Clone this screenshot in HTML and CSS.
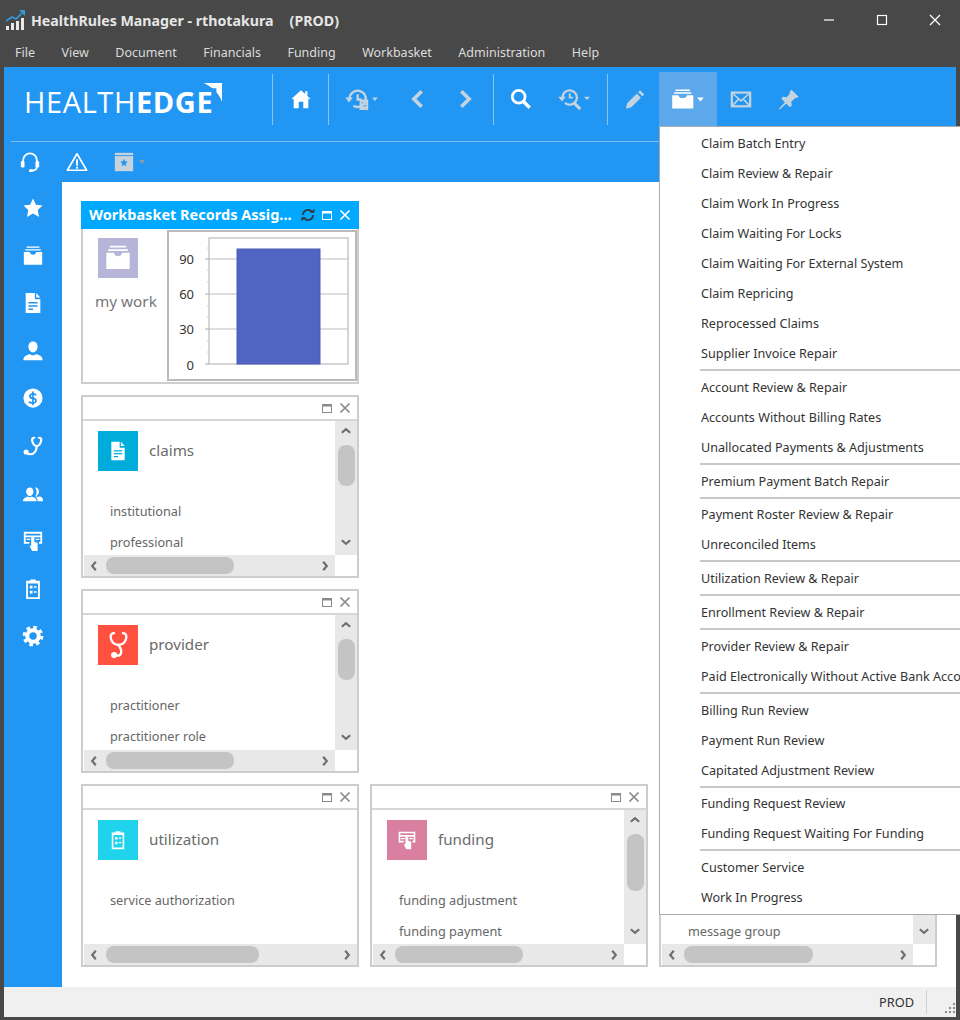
FILE: index.html
```html
<!DOCTYPE html>
<html>
<head>
    <title>HealthRules Manager</title>
    <link rel="stylesheet" href="styles.css">
</head>
<body>
    <svg class="sprite">
        <symbol id="i-star" viewBox="0 0 24 24"><path d="M12 1.500l3.200 6.900 7.300.9-5.400 5 1.500 7.400L12 18.000l-6.600 3.700 1.500-7.400-5.400-5 7.300-.9z"/></symbol>
        <symbol id="i-inbox" viewBox="0 0 24 24"><path d="M5 1.500h14v1.600H5zM3.500 4.500h17v1.600h-17zM2 7.500h6.500c.4 2 1.700 3 3.500 3s3.100-1 3.500-3H22v14H2z"/></symbol>
        <symbol id="i-doc" viewBox="0 0 24 24"><path fill-rule="evenodd" d="M4 1h10v7h6v15H4zM15.500 1l4.500 5h-4.500zM7 11h10v1.500H7zM7 14.500h10V16H7zM7 18h5v1.500H7z"/></symbol>
        <symbol id="i-person" viewBox="0 0 24 24"><path d="M12 1.500c3.200 0 5 2.300 5 5.500s-2 6.500-5 6.500S7 10.200 7 7s1.800-5.500 5-5.500zM1.500 22c0-4.500 3.200-5.200 7-6.800.9.900 2.200 1.300 3.500 1.300s2.600-.4 3.500-1.300c3.800 1.600 7 2.300 7 6.800z"/></symbol>
        <symbol id="i-dollar" viewBox="0 0 24 24"><path fill-rule="evenodd" d="M12 1.500a10.500 10.500 0 1 1 0 21 10.500 10.500 0 0 1 0-21zM11 5v1.700c-2 .3-3.300 1.500-3.300 3.300 0 2 1.500 2.800 3.300 3.300v3c-1 0-2-.4-2.800-1.100L7 16.800c1 .9 2.400 1.500 4 1.500V20h1.800v-1.700c2.100-.3 3.400-1.600 3.400-3.500 0-2.100-1.500-2.900-3.400-3.400V8.600c.8.100 1.500.4 2.200.9l1-1.600c-.9-.7-2-1.100-3.200-1.200V5zm0 3.600v2.500c-.9-.3-1.300-.6-1.300-1.200 0-.7.500-1.200 1.300-1.300zm1.800 5.100c1 .3 1.400.7 1.400 1.300 0 .8-.5 1.300-1.400 1.400z"/></symbol>
        <symbol id="i-stetho" viewBox="0 0 24 24"><g fill="none" stroke="currentColor" stroke-width="2.400" stroke-linecap="round"><path d="M13.500 3c-1.500 0-2.500 1-2.500 2.500 0 3 2.500 6.500 5 6.500s5-3.500 5-6.500C21 4 20 3 18.500 3"/><path d="M16 12c0 5-2.500 9-7 9-2 0-3-.5-4-1.500"/></g><circle cx="4.500" cy="18.500" r="2.800"/></symbol>
        <symbol id="i-stetho-v" viewBox="0 0 24 32"><g fill="none" stroke="currentColor" stroke-width="2.600" stroke-linecap="round"><path d="M7 2.500C4.500 2.500 3 4 3 6.500c0 5 3.500 9.500 9 9.500s9-4.500 9-9.500c0-2.500-1.500-4-4-4"/><path d="M12 16c2.500 4 4 5.500 3 9-.6 2.300-3 3.500-5.500 3"/></g><circle cx="7" cy="27.500" r="3.500"/></symbol>
        <symbol id="i-people" viewBox="0 0 24 24"><path d="M8.500 5c2.500 0 4 1.900 4 4.300s-1.600 5-4 5-4-2.600-4-5S6 5 8.500 5zM1 20c0-3.500 2.500-4.100 5.300-5.300.6.600 1.300.9 2.200.9s1.600-.3 2.200-.9c2.800 1.200 5.300 1.800 5.300 5.300zM14 5c2.400-.4 4.500 1.500 4.500 4.300 0 2.400-1.500 5-3.800 5 1.900-3 1.600-7-.7-9.300zM17 20c0-2.400-.8-4-2.500-5l1-.6c.6.600 1.300.9 2 .9s1.400-.3 2-.9c2.600 1.200 3.500 2 3.500 5.600z"/></symbol>
        <symbol id="i-fund" viewBox="0 0 24 24"><path fill-rule="evenodd" d="M2 2h20v13h-3.500v-2H20V8H4v5h4v2H2zM4 4v2h16V4zM5 9.500h4V11H5zM15 9.500h4V11h-4z"/><path d="M10 8h3.500v5l3.500 1v9h-6l-3-6 2 .5z"/></symbol>
        <symbol id="i-clip" viewBox="0 0 24 24"><path fill-rule="evenodd" d="M9 1.500h6V3h4.500v20h-15V3H9zM6.500 6v15h11V6zM8.500 8.500h3v3h-3zM13 9h3v1.500h-3zM8.500 14h3v3h-3zM13 14.500h3V16h-3z"/></symbol>
        <symbol id="i-gear" viewBox="0 0 24 24"><circle cx="12" cy="12" r="6.300" fill="none" stroke="currentColor" stroke-width="4.400"/><circle cx="12" cy="12" r="9.600" fill="none" stroke="currentColor" stroke-width="3.400" stroke-dasharray="3.900 3.640"/></symbol>
        <symbol id="i-max" viewBox="0 0 12 12"><path fill-rule="evenodd" d="M1 2h10v9H1zM2 4.500V10h8V4.500z"/></symbol>
        <symbol id="i-close" viewBox="0 0 12 12"><path d="M1.500 1.500l9 9M10.500 1.500l-9 9" fill="none" stroke="currentColor" stroke-width="1.700"/></symbol>
        <symbol id="i-up" viewBox="0 0 10 10"><path d="M1.500 6.500L5 3.500l3.500 3" fill="none" stroke="currentColor" stroke-width="1.800"/></symbol>
        <symbol id="i-down" viewBox="0 0 10 10"><path d="M1.500 3.500L5 6.500l3.500-3" fill="none" stroke="currentColor" stroke-width="1.800"/></symbol>
        <symbol id="i-left" viewBox="0 0 10 10"><path d="M6.500 1.500L3.500 5l3 3.500" fill="none" stroke="currentColor" stroke-width="1.800"/></symbol>
        <symbol id="i-right" viewBox="0 0 10 10"><path d="M3.500 1.500L6.500 5l-3 3.500" fill="none" stroke="currentColor" stroke-width="1.800"/></symbol>
    </svg>

    <div class="titlebar">
        <svg class="app-icon" viewBox="0 0 20 20">
            <path d="M0 16h3v4H0zM5 13h3v7H5zM10 11h3v9h-3zM15 8h3v12h-3z" fill="#e8e8e8"/>
            <path d="M0 11l6-4 4 2 7-7" fill="none" stroke="#2f9bd8" stroke-width="1.600"/>
            <path d="M13 0h6v6z" fill="#2f9bd8"/>
        </svg>
        <span class="app-title">HealthRules Manager - rthotakura</span>
        <span class="app-title env">(PROD)</span>
        <div class="win-controls">
            <svg viewBox="0 0 12 12"><path d="M1 6h10" stroke="#fff" stroke-width="1.200"/></svg>
            <svg viewBox="0 0 12 12"><rect x="1.500" y="1.500" width="9" height="9" fill="none" stroke="#fff" stroke-width="1.200"/></svg>
            <svg viewBox="0 0 12 12"><path d="M1 1l10 10M11 1L1 11" stroke="#fff" stroke-width="1.300"/></svg>
        </div>
    </div>

    <div class="menubar">
        <span>File</span><span>View</span><span>Document</span><span>Financials</span><span>Funding</span><span>Workbasket</span><span>Administration</span><span>Help</span>
    </div>

    <div class="app">
        <div class="toolbar">
            <div class="logo">
                <span class="logo-text">HEALTH<b>EDGE</b></span>
                <svg class="logo-mark" viewBox="0 0 20 21"><path d="M0 0h19v20c-2-7-9-15-19-20z" fill="#fff"/><path d="M6 5.500h7v7c-2-3-4-5-7-7z" fill="#2196f3"/></svg>
            </div>
            <div class="tb-sep"></div>
            <div class="tb-btn w-home">
                <svg class="ic white" viewBox="0 0 24 24"><path d="M12 2.500l4.500 4V3.500h2.500v5.200l3.500 3.300H20v10h-5.500v-7h-5v7H4V12H1.500z"/></svg>
            </div>
            <div class="tb-sep"></div>
            <div class="tb-btn w-hist">
                <svg class="ic wide dim" viewBox="0 0 34 24"><g fill="none" stroke="currentColor" stroke-width="2.400"><path d="M4.500 11a8.500 8.500 0 1 1 4 7.500"/><path d="M13 6.500V12h4"/></g><path d="M0 10h8l-4 5z"/><path fill-rule="evenodd" d="M15 12h9v11h-9zM17 15v1h5v-1zM17 18v1h5v-1z"/><path d="M28 10h6l-3 3.500z"/></svg>
            </div>
            <div class="tb-btn w-nav">
                <svg class="ic dim" viewBox="0 0 24 24"><path d="M16 3.500L7.500 12l8.500 8.500" fill="none" stroke="currentColor" stroke-width="4"/></svg>
            </div>
            <div class="tb-btn w-nav w-nav-last">
                <svg class="ic dim" viewBox="0 0 24 24"><path d="M8 3.500l8.500 8.500L8 20.500" fill="none" stroke="currentColor" stroke-width="4"/></svg>
            </div>
            <div class="tb-sep"></div>
            <div class="tb-btn w-search">
                <svg class="ic white" viewBox="0 0 24 24"><circle cx="9.500" cy="9.500" r="7" fill="none" stroke="currentColor" stroke-width="3"/><path d="M14.500 14.500l7 7" stroke="currentColor" stroke-width="3.600"/></svg>
            </div>
            <div class="tb-btn w-hsearch">
                <svg class="ic wide dim" viewBox="0 0 34 24"><g fill="none" stroke="currentColor"><path d="M4.500 10a7.500 7.500 0 1 1 2.500 5.500" stroke-width="2.400"/><path d="M12 5.500V10h3.500" stroke-width="2"/><path d="M17 16l6 6" stroke-width="3.200"/></g><path d="M0 9h8l-4 5z"/><path d="M27 9h6l-3 3.500z"/></svg>
            </div>
            <div class="tb-sep"></div>
            <div class="tb-btn w-pencil">
                <svg class="ic dim" viewBox="0 0 24 24"><path d="M17.500 2.500l4.500 4.500-2 2-4.500-4.500zM14 6l4.500 4.500L8 21l-6 1.500L3.500 16.500z"/></svg>
            </div>
            <div class="tb-btn w-inbox active">
                <svg class="ic wide white" viewBox="0 0 34 24"><path d="M3.500 1.500h15V3h-15zM2 4.500h18V6H2zM0 7.500h6.500c.4 2 2 3 4.500 3s4.100-1 4.500-3H22v14H0z"/><path d="M26 10h7l-3.500 4z"/></svg>
            </div>
            <div class="tb-btn w-mail">
                <svg class="ic dim" viewBox="0 0 24 24"><rect x="2" y="5" width="20" height="15" fill="none" stroke="currentColor" stroke-width="2.400"/><path d="M3 6l9 8 9-8M3 19l6.500-7M21 19l-6.500-7" fill="none" stroke="currentColor" stroke-width="1.800"/></svg>
            </div>
            <div class="tb-btn w-pin">
                <svg class="ic dim" viewBox="0 0 24 24"><path d="M14.500 1.500l8 8-2 1.500-1.500-.5-4.500 4.500.5 4-2 2-4-4-7 6.500-1-1 6.500-7-4-4 2-2 4 .5L13 6l-.5-1.500z"/></svg>
            </div>
        </div>

        <div class="subbar">
            <svg class="sub-ic" viewBox="0 0 24 24"><g fill="none" stroke="#fff" stroke-width="2"><path d="M4.500 13v-3a7.500 7.500 0 0 1 15 0v3"/><path d="M19.500 17c0 3-2.500 4.500-6 4.500"/></g><rect x="2" y="11" width="4" height="7" rx="1.500" fill="#fff"/><rect x="18" y="11" width="4" height="7" rx="1.500" fill="#fff"/><rect x="11" y="20" width="4" height="3" rx="1" fill="#fff"/></svg>
            <svg class="sub-ic" viewBox="0 0 24 24"><path d="M12 3L22.500 21h-21z" fill="none" stroke="#fff" stroke-width="1.800" stroke-linejoin="round"/><path d="M11 9h2v7h-2zM11 17.300h2v2h-2z" fill="#fff"/></svg>
            <div class="fav">
                <svg class="sub-ic" viewBox="0 0 24 24"><path d="M2 2h20v20H2z" fill="#c6d2dc"/><path d="M2 5h20" stroke="#2196f3"/><path d="M12 8.500l1.200 2.800 3 .3-2.300 2 .7 3-2.600-1.600-2.600 1.600.7-3-2.300-2 3-.3z" fill="#2196f3"/></svg>
                <span class="caret-gray"></span>
            </div>
        </div>

        <div class="main">
            <div class="sidebar">
                <svg class="side-ic"><use href="#i-star"/></svg>
                <svg class="side-ic"><use href="#i-inbox"/></svg>
                <svg class="side-ic"><use href="#i-doc"/></svg>
                <svg class="side-ic"><use href="#i-person"/></svg>
                <svg class="side-ic"><use href="#i-dollar"/></svg>
                <svg class="side-ic"><use href="#i-stetho"/></svg>
                <svg class="side-ic"><use href="#i-people"/></svg>
                <svg class="side-ic"><use href="#i-fund"/></svg>
                <svg class="side-ic"><use href="#i-clip"/></svg>
                <svg class="side-ic"><use href="#i-gear"/></svg>
            </div>

            <div class="dashboard">
                <!-- my work -->
                <div class="panel panel-first">
                    <div class="panel-head head-blue">
                        <span class="head-title">Workbasket Records Assig...</span>
                        <svg class="head-ic refresh" viewBox="0 0 14 14"><g fill="none" stroke="#333" stroke-width="1.800"><path d="M2 7a5 5 0 0 1 9-3"/><path d="M12 7a5 5 0 0 1-9 3"/></g><path d="M9 4.800h4.500V.8zM5 9.200H.5v4z" fill="#333"/></svg>
                        <svg class="head-ic"><use href="#i-max"/></svg>
                        <svg class="head-ic"><use href="#i-close"/></svg>
                    </div>
                    <div class="work-body">
                        <div class="work-left">
                            <div class="tile purple"><svg class="tile-ic tile-lg"><use href="#i-inbox"/></svg></div>
                            <div class="work-label">my work</div>
                        </div>
                        <div class="chart">
                            <svg class="chart-svg" viewBox="0 0 186 147">
                                <rect x="40" y="6" width="139" height="126" fill="#fff" stroke="#c8c8c8" stroke-width="1.500"/>
                                <path d="M40 27h139M40 62h139M40 97h139" stroke="#bdbdbd"/>
                                <path d="M36 27h4M36 62h4M36 97h4M36 132h4" stroke="#aaa"/>
                                <path d="M38 16h2M38 38h2M38 50h2M38 74h2M38 85h2M38 109h2M38 120h2" stroke="#ccc"/>
                                <rect x="68" y="17" width="83" height="115" fill="#5064c4" stroke="#4a5db5"/>
                                <g class="chart-num">
                                    <text x="25" y="32" text-anchor="end">90</text>
                                    <text x="25" y="67" text-anchor="end">60</text>
                                    <text x="25" y="102" text-anchor="end">30</text>
                                    <text x="25" y="138" text-anchor="end">0</text>
                                </g>
                            </svg>
                        </div>
                    </div>
                </div>

                <!-- claims -->
                <div class="panel panel-first">
                    <div class="panel-head">
                        <svg class="head-ic"><use href="#i-max"/></svg>
                        <svg class="head-ic"><use href="#i-close"/></svg>
                    </div>
                    <div class="panel-main">
                        <div class="panel-content">
                            <div class="tile-row">
                                <div class="tile cyan"><svg class="tile-ic"><use href="#i-doc"/></svg></div>
                                <span class="tile-label">claims</span>
                            </div>
                            <div class="link">institutional</div>
                            <div class="link">professional</div>
                        </div>
                        <div class="vscroll">
                            <svg class="arrow"><use href="#i-up"/></svg>
                            <div class="vthumb"></div>
                            <svg class="arrow arrow-end"><use href="#i-down"/></svg>
                        </div>
                    </div>
                    <div class="hrow">
                        <div class="hscroll">
                            <svg class="arrow"><use href="#i-left"/></svg>
                            <div class="hthumb t128"></div>
                            <svg class="arrow arrow-end"><use href="#i-right"/></svg>
                        </div>
                        <div class="corner"></div>
                    </div>
                </div>

                <!-- provider -->
                <div class="panel panel-first">
                    <div class="panel-head">
                        <svg class="head-ic"><use href="#i-max"/></svg>
                        <svg class="head-ic"><use href="#i-close"/></svg>
                    </div>
                    <div class="panel-main">
                        <div class="panel-content">
                            <div class="tile-row">
                                <div class="tile red"><svg class="tile-ic tile-tall"><use href="#i-stetho-v"/></svg></div>
                                <span class="tile-label">provider</span>
                            </div>
                            <div class="link">practitioner</div>
                            <div class="link">practitioner role</div>
                        </div>
                        <div class="vscroll">
                            <svg class="arrow"><use href="#i-up"/></svg>
                            <div class="vthumb"></div>
                            <svg class="arrow arrow-end"><use href="#i-down"/></svg>
                        </div>
                    </div>
                    <div class="hrow">
                        <div class="hscroll">
                            <svg class="arrow"><use href="#i-left"/></svg>
                            <div class="hthumb t128"></div>
                            <svg class="arrow arrow-end"><use href="#i-right"/></svg>
                        </div>
                        <div class="corner"></div>
                    </div>
                </div>

                <!-- utilization -->
                <div class="panel panel-first">
                    <div class="panel-head">
                        <svg class="head-ic"><use href="#i-max"/></svg>
                        <svg class="head-ic"><use href="#i-close"/></svg>
                    </div>
                    <div class="panel-main">
                        <div class="panel-content">
                            <div class="tile-row">
                                <div class="tile aqua"><svg class="tile-ic"><use href="#i-clip"/></svg></div>
                                <span class="tile-label">utilization</span>
                            </div>
                            <div class="link">service authorization</div>
                        </div>
                    </div>
                    <div class="hrow">
                        <div class="hscroll">
                            <svg class="arrow"><use href="#i-left"/></svg>
                            <div class="hthumb t153"></div>
                            <svg class="arrow arrow-end"><use href="#i-right"/></svg>
                        </div>
                    </div>
                </div>

                <!-- funding -->
                <div class="panel">
                    <div class="panel-head">
                        <svg class="head-ic"><use href="#i-max"/></svg>
                        <svg class="head-ic"><use href="#i-close"/></svg>
                    </div>
                    <div class="panel-main">
                        <div class="panel-content">
                            <div class="tile-row">
                                <div class="tile pink"><svg class="tile-ic"><use href="#i-fund"/></svg></div>
                                <span class="tile-label">funding</span>
                            </div>
                            <div class="link">funding adjustment</div>
                            <div class="link">funding payment</div>
                        </div>
                        <div class="vscroll">
                            <svg class="arrow"><use href="#i-up"/></svg>
                            <div class="vthumb tall"></div>
                            <svg class="arrow arrow-end"><use href="#i-down"/></svg>
                        </div>
                    </div>
                    <div class="hrow">
                        <div class="hscroll">
                            <svg class="arrow"><use href="#i-left"/></svg>
                            <div class="hthumb t128"></div>
                            <svg class="arrow arrow-end"><use href="#i-right"/></svg>
                        </div>
                        <div class="corner"></div>
                    </div>
                </div>

                <!-- messages, mostly under the open menu -->
                <div class="panel">
                    <div class="panel-head"></div>
                    <div class="panel-main">
                        <div class="panel-content content-end">
                            <div class="link link-msg">message group</div>
                        </div>
                        <div class="vscroll">
                            <svg class="arrow arrow-end"><use href="#i-down"/></svg>
                        </div>
                    </div>
                    <div class="hrow">
                        <div class="hscroll">
                            <svg class="arrow"><use href="#i-left"/></svg>
                            <div class="hthumb t129"></div>
                            <svg class="arrow arrow-end"><use href="#i-right"/></svg>
                        </div>
                        <div class="corner"></div>
                    </div>
                </div>
            </div>
        </div>

        <div class="statusbar">
            <span class="status-text">PROD</span>
            <div class="status-sep"></div>
            <svg class="grip" viewBox="0 0 12 12"><path d="M9 1h2v2H9zM5 5h2v2H5zM9 5h2v2H9zM1 9h2v2H1zM5 9h2v2H5zM9 9h2v2H9z" fill="#8a8a8a"/></svg>
        </div>

        <div class="dropmenu">
            <div class="item">Claim Batch Entry</div>
            <div class="item">Claim Review &amp; Repair</div>
            <div class="item">Claim Work In Progress</div>
            <div class="item">Claim Waiting For Locks</div>
            <div class="item">Claim Waiting For External System</div>
            <div class="item">Claim Repricing</div>
            <div class="item">Reprocessed Claims</div>
            <div class="item">Supplier Invoice Repair</div>
            <div class="sep"></div>
            <div class="item">Account Review &amp; Repair</div>
            <div class="item">Accounts Without Billing Rates</div>
            <div class="item">Unallocated Payments &amp; Adjustments</div>
            <div class="sep"></div>
            <div class="item">Premium Payment Batch Repair</div>
            <div class="sep"></div>
            <div class="item">Payment Roster Review &amp; Repair</div>
            <div class="item">Unreconciled Items</div>
            <div class="sep"></div>
            <div class="item">Utilization Review &amp; Repair</div>
            <div class="sep"></div>
            <div class="item">Enrollment Review &amp; Repair</div>
            <div class="sep"></div>
            <div class="item">Provider Review &amp; Repair</div>
            <div class="item">Paid Electronically Without Active Bank Accounts</div>
            <div class="sep"></div>
            <div class="item">Billing Run Review</div>
            <div class="item">Payment Run Review</div>
            <div class="item">Capitated Adjustment Review</div>
            <div class="sep"></div>
            <div class="item">Funding Request Review</div>
            <div class="item">Funding Request Waiting For Funding</div>
            <div class="sep"></div>
            <div class="item">Customer Service</div>
            <div class="item">Work In Progress</div>
        </div>
    </div>
</body>
</html>
```

FILE: styles.css
```css
html, body {
    margin: 0;
    height: 100%;
    overflow: hidden;
}

body {
    width: 960px;
    height: 1020px;
    background-color: #484848;
    font-family: "Noto Sans", sans-serif;
    font-size: 13px;
    display: flex;
    flex-direction: column;
}

.sprite {
    display: none;
}

/* title and menu */
.titlebar {
    height: 40px;
    flex: none;
    display: flex;
    align-items: center;
    padding-left: 6px;
}

.app-icon {
    width: 20px;
    height: 20px;
    margin-right: 5px;
}

.app-title {
    color: #e6e6e6;
    font-weight: 700;
    font-size: 14.200px;
    white-space: nowrap;
}

.env {
    margin-left: 16px;
}

.win-controls {
    margin-left: auto;
    display: flex;
}

.win-controls svg {
    width: 12px;
    height: 12px;
    margin-right: 41px;
}

.win-controls svg:last-child {
    margin-right: 19px;
}

.menubar {
    height: 27px;
    flex: none;
    display: flex;
    gap: 26.500px;
    padding-left: 15px;
    color: #dcdcdc;
    font-size: 12.500px;
    line-height: 25px;
}

/* app frame */
.app {
    position: relative;
    flex: none;
    width: 952px;
    height: 950px;
    margin-left: 4px;
    background-color: #2196f3;
    display: flex;
    flex-direction: column;
}

.toolbar {
    height: 74px;
    flex: none;
    display: flex;
    align-items: center;
    border-bottom: 1px solid #7cbdf0;
    margin-left: 7px;
    box-sizing: content-box;
}

.logo {
    position: relative;
    width: 261px;
    flex: none;
    box-sizing: border-box;
    padding-left: 13px;
    height: 74px;
    display: flex;
    align-items: center;
}

.logo-text {
    font-family: "Open Sans", sans-serif;
    font-weight: 400;
    font-size: 29px;
    color: #fff;
    letter-spacing: 0.600px;
    white-space: nowrap;
    margin-top: -5px;
}

.logo-text b {
    font-weight: 700;
}

.logo-mark {
    position: absolute;
    left: 193px;
    top: 16px;
    width: 19px;
    height: 20px;
}

.tb-sep {
    width: 1px;
    height: 51px;
    flex: none;
    background-color: #8cc2ee;
    margin-top: -10px;
}

.tb-btn {
    height: 54px;
    margin-top: -10px;
    flex: none;
    display: flex;
    align-items: center;
    justify-content: center;
    box-sizing: border-box;
}

.w-home { width: 55px; }
.w-hist { width: 65px; }
.w-nav { width: 47px; }
.w-nav-last { width: 52px; padding-right: 5px; }
.w-search { width: 54px; }
.w-hsearch { width: 59px; padding-right: 6px; }
.w-pencil { width: 51px; padding-left: 3px; }
.w-inbox { width: 58px; }
.w-mail { width: 48px; }
.w-pin { width: 47px; }

.active {
    background-color: #5ca8ea;
}

.ic {
    width: 22px;
    height: 22px;
    fill: currentColor;
}

.ic.wide {
    width: 33px;
    height: 23px;
}

.white {
    color: #fff;
}

.dim {
    color: #c3d3e0;
}

.subbar {
    height: 40px;
    flex: none;
    display: flex;
    align-items: center;
    gap: 25px;
    padding-left: 15px;
}

.sub-ic {
    width: 22px;
    height: 22px;
    display: block;
}

.fav {
    display: flex;
    align-items: center;
    gap: 4px;
}

.caret-gray {
    width: 0;
    height: 0;
    border-left: 3px solid transparent;
    border-right: 3px solid transparent;
    border-top: 4px solid #8f9aa5;
}

/* body of the window */
.main {
    flex: 1;
    display: flex;
    min-height: 0;
}

.sidebar {
    width: 58px;
    flex: none;
    box-sizing: border-box;
    padding-top: 15px;
    display: flex;
    flex-direction: column;
    align-items: center;
    gap: 25.600px;
}

.side-ic {
    width: 22px;
    height: 22px;
    flex: none;
    fill: #fff;
    color: #fff;
}

.dashboard {
    flex: 1;
    background-color: #fff;
    box-sizing: border-box;
    padding: 19px 0 0 19px;
    display: grid;
    grid-template-columns: repeat(3, 278px);
    grid-template-rows: 183px 183px 184px 183px;
    gap: 11px;
    align-content: start;
}

.panel {
    border: 2px solid #cdcdcd;
    box-sizing: border-box;
    display: flex;
    flex-direction: column;
    background-color: #fff;
    min-width: 0;
    min-height: 0;
}

.panel-first {
    grid-column: 1;
}

.panel-head {
    height: 22px;
    flex: none;
    display: flex;
    align-items: center;
    justify-content: flex-end;
    gap: 6px;
    padding-right: 6px;
    border-bottom: 2px solid #d6d6d6;
    fill: #8a8a8a;
    color: #8a8a8a;
}

.head-blue {
    height: 28px;
    margin: -2px -2px 0;
    padding-right: 8px;
    border-bottom: none;
    background-color: #00a8ff;
    fill: #fff;
    color: #fff;
}

.head-title {
    color: #fff;
    font-weight: 700;
    font-size: 14.500px;
    white-space: nowrap;
    margin: -2px auto 0 0;
    padding-left: 8px;
}

.head-ic {
    width: 12px;
    height: 12px;
    flex: none;
}

.refresh {
    width: 14px;
    height: 14px;
}

.panel-main {
    flex: 1;
    display: flex;
    min-height: 0;
}

.panel-content {
    flex: 1;
    overflow: hidden;
    min-width: 0;
    padding: 10px 0 0 15px;
    color: #666;
}

.content-end {
    display: flex;
    align-items: flex-end;
    padding: 0 0 4px 27px;
}

.tile-row {
    display: flex;
    align-items: center;
    gap: 11px;
    margin-bottom: 31px;
}

.tile {
    width: 40px;
    height: 40px;
    flex: none;
    display: flex;
    align-items: center;
    justify-content: center;
}

.tile-ic {
    width: 20px;
    height: 20px;
    fill: #fff;
    color: #fff;
}

.tile-lg {
    width: 28px;
    height: 28px;
}

.tile-tall {
    width: 21px;
    height: 28px;
}

.cyan { background-color: #00acd9; }
.red { background-color: #ff5040; }
.aqua { background-color: #1fd3ec; }
.pink { background-color: #d97f9f; }
.purple { background-color: #b6b5d9; }

.tile-label {
    font-size: 15.200px;
    color: #6a6a6a;
    margin-top: -2px;
}

.link {
    margin-left: 12px;
    font-size: 12.700px;
    line-height: 18px;
    margin-bottom: 13px;
    white-space: nowrap;
}

.link-msg {
    margin: 0;
}

.vscroll {
    width: 22px;
    flex: none;
    background-color: #e8e8e8;
    display: flex;
    flex-direction: column;
    align-items: center;
    padding: 4px 0 7px;
    box-sizing: border-box;
}

.arrow {
    width: 12px;
    height: 12px;
    flex: none;
    color: #6e6e6e;
}

.arrow-end {
    margin-top: auto;
}

.vthumb {
    width: 17px;
    height: 41px;
    margin-top: 8px;
    border-radius: 8px;
    background-color: #c4c4c4;
}

.vthumb.tall {
    height: 57px;
}

.hrow {
    height: 21px;
    flex: none;
    display: flex;
}

.hscroll {
    flex: 1;
    margin-left: 1px;
    background-color: #e8e8e8;
    display: flex;
    align-items: center;
    padding: 0 4px;
}

.hscroll .arrow {
    margin-right: 6px;
}

.hscroll .arrow-end {
    margin: 0 0 0 auto;
}

.hthumb {
    height: 17px;
    border-radius: 8px;
    background-color: #c4c4c4;
}

.t128 { width: 128px; }
.t129 { width: 129px; }
.t153 { width: 153px; }

.corner {
    width: 22px;
    flex: none;
    background-color: #fff;
}

/* workbasket panel */
.work-body {
    flex: 1;
    display: flex;
    min-height: 0;
}

.work-left {
    width: 84px;
    flex: none;
    padding: 9px 0 0 15px;
    box-sizing: border-box;
}

.work-label {
    font-size: 15.300px;
    color: #777;
    margin: 13px 0 0 -3px;
    white-space: nowrap;
}

.chart {
    flex: 1;
    border: 2px solid #bababa;
    margin: 1px 0;
    min-width: 0;
}

.chart-svg {
    width: 186px;
    height: 147px;
    display: block;
}

.chart-num {
    font-family: "Noto Sans", sans-serif;
    font-size: 13px;
    fill: #333;
}

/* statusbar */
.statusbar {
    height: 30px;
    flex: none;
    background-color: #f0f0f0;
    display: flex;
    align-items: center;
    color: #333;
}

.status-text {
    margin-left: auto;
    margin-right: 12px;
    font-size: 12.800px;
}

.status-sep {
    width: 1px;
    height: 24px;
    background-color: #cfcfcf;
    margin-right: 17px;
}

.grip {
    width: 12px;
    height: 12px;
    margin-top: 12px;
}

/* open dropdown */
.dropmenu {
    position: absolute;
    left: 655px;
    top: 59px;
    width: 330px;
    box-sizing: border-box;
    background-color: #fff;
    border: 1px solid #aaa;
    padding: 1px 0 2px;
}

.item {
    height: 30px;
    line-height: 32px;
    padding-left: 41px;
    color: #333;
    font-size: 12.600px;
    white-space: nowrap;
}

.sep {
    height: 2px;
    margin: 1px 0 0.800px 40px;
    background-color: #c8c8c8;
}
```
